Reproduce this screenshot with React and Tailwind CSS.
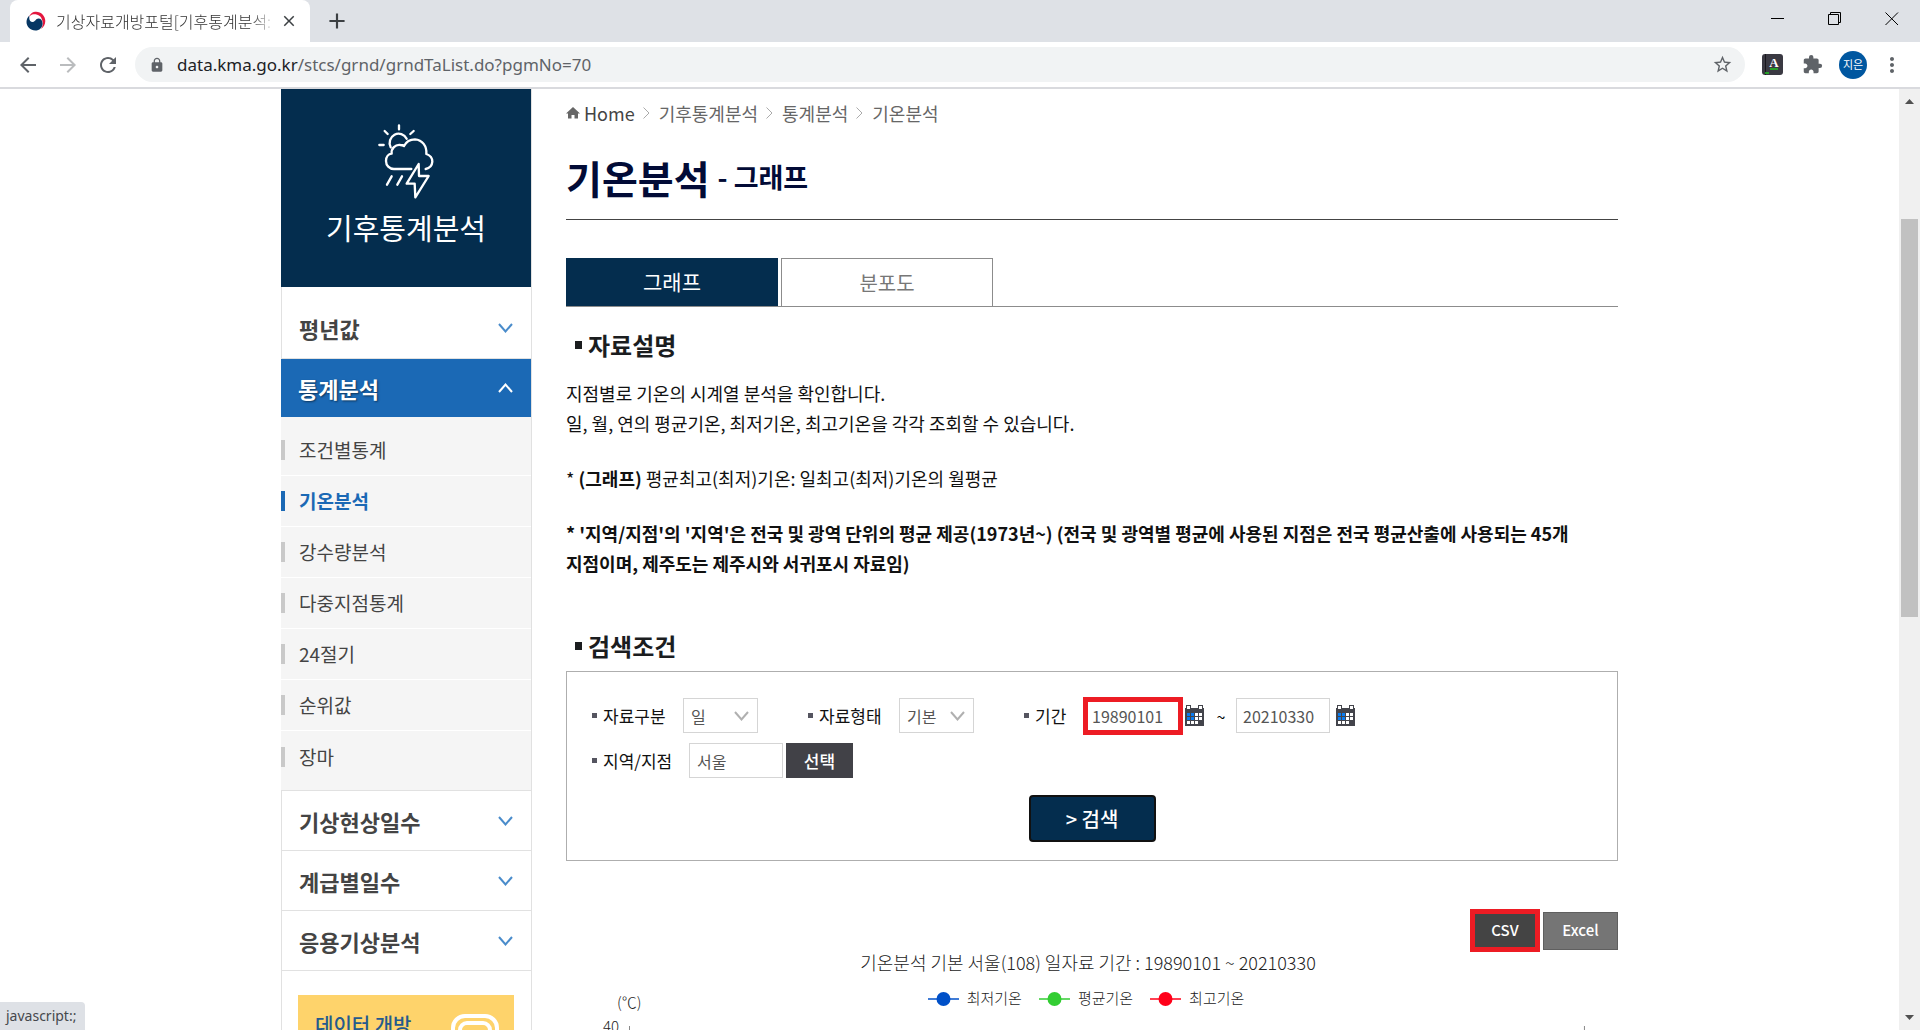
import { useState } from "react";
import {
  MdAdd,
  MdArrowBack,
  MdArrowForward,
  MdClose,
  MdExtension,
  MdLock,
  MdMoreVert,
  MdRefresh,
  MdStarBorder,
} from "react-icons/md";

const subMenu = [
  "조건별통계",
  "기온분석",
  "강수량분석",
  "다중지점통계",
  "24절기",
  "순위값",
  "장마",
];

const lowerMenu = ["기상현상일수", "계급별일수", "응용기상분석"];

const legend = [
  { label: "최저기온", color: "#0050c8" },
  { label: "평균기온", color: "#32cd32" },
  { label: "최고기온", color: "#ff0019" },
];

function Favicon() {
  return (
    <svg width="20" height="20" viewBox="0 0 20 20" className="shrink-0">
      <path
        d="M9 0.700C14.500 0 19.300 4.500 19.300 10C19.300 13.500 17.500 16.500 15 18C16.800 15.500 17.300 12.500 16.300 9.500C15.500 5.500 12.500 3 7.500 3.200C5.500 3.400 4 4.500 3 6C4 3 6 1.200 9 0.700Z"
        fill="#e4173e"
      />
      <path
        d="M3.300 4.500C1.500 6.300 0.500 8.500 0.500 11C0.500 15.700 4.500 19.500 9.300 19.500C13.500 19.500 16.600 16.300 16.600 12.400C16.600 9.500 14.800 7.500 12.400 7.500C9.800 7.500 9.300 10.800 6.900 11C4.800 11.200 3.300 9.500 3.300 7.500C3.300 6.500 3.200 5.500 3.300 4.500Z"
        fill="#073763"
      />
    </svg>
  );
}

function Chevron({ up, className }) {
  return (
    <svg
      width="15"
      height="10"
      viewBox="0 0 15 10"
      fill="none"
      stroke="currentColor"
      strokeWidth="2"
      className={className}
    >
      <path d={up ? "M1 9 L7.5 1.5 L14 9" : "M1 1 L7.5 8.5 L14 1"} />
    </svg>
  );
}

function WeatherIcon() {
  return (
    <svg
      width="56"
      height="75"
      viewBox="323 117 168 225"
      fill="none"
      stroke="white"
      strokeWidth="7"
      strokeLinecap="round"
      strokeLinejoin="round"
    >
      <path d="M386 121V133M343 138L352 147M430 138L420 147M327 180H340" />
      <path d="M361 187A27 28 0 0 1 409 161" />
      <path d="M423 252H371C357 252 347 241 347 228C347 215 355 207 364 206C362 190 375 178 390 180C395 180 398 181 401 183C408 169 420 163 434 163C456 164 470 184 468 207C480 211 486 220 486 230C485 243 476 250 466 252" />
      <path d="M445 237L409 296H433L435 337L475 273H446Z" />
      <path d="M364 274L350 299M395 274L381 299" />
    </svg>
  );
}

function CalendarIcon() {
  const cells = [];
  for (let row = 0; row < 3; row++) {
    for (let col = 0; col < 4; col++) {
      if (row === 2 && col === 3) continue;
      cells.push(
        <rect
          key={`${row}-${col}`}
          x={2 + col * 4}
          y={8 + row * 4}
          width="3"
          height="3"
          fill={col < 2 && row < 2 ? "#0a7cf0" : "white"}
        />
      );
    }
  }
  return (
    <svg width="19" height="21" viewBox="0 0 19 21">
      <path d="M0 3H19V21H0Z" fill="#43444b" />
      <path d="M1 0H6V5H1ZM13 0H18V5H13Z" fill="#43444b" />
      <path d="M2 1H5V4H2ZM14 1H17V4H14Z" fill="white" />
      {cells}
    </svg>
  );
}

function TopBar() {
  return (
    <header className="shrink-0 border-b-2 border-[#d9dade]">
      <div className="flex h-[42px] items-stretch bg-[#dee1e6] pl-[10px]">
        <div className="flex w-[300px] items-center rounded-t-lg bg-white pr-2 pl-4">
          <Favicon />
          <span className="ml-[10px] w-[218px] overflow-hidden text-[16px] leading-5 font-light whitespace-nowrap text-[#333] [mask-image:linear-gradient(to_right,black_90%,transparent)]">
            기상자료개방포털[기후통계분석:
          </span>
          <button aria-label="탭 닫기" className="ml-[6px] text-[#3c4043]">
            <MdClose size={18} />
          </button>
        </div>
        <button aria-label="새 탭" className="ml-[14px] text-[#3c4043]">
          <MdAdd size={26} />
        </button>
        <div className="ml-auto flex items-center gap-[43px] pr-[21px] pb-1">
          <button aria-label="최소화">
            <svg width="14" height="14" viewBox="0 0 14 14">
              <path d="M0 6.500H13" stroke="black" />
            </svg>
          </button>
          <button aria-label="이전 크기로">
            <svg width="14" height="14" viewBox="0 0 14 14" fill="none" stroke="black">
              <path d="M0.500 2.500H10.500V12.500H0.500ZM2.500 2.500V0.500H12.500V10.500H10.500" />
            </svg>
          </button>
          <button aria-label="닫기">
            <svg width="14" height="14" viewBox="0 0 14 14" stroke="black">
              <path d="M0.500 0.500L13 13M13 0.500L0.500 13" />
            </svg>
          </button>
        </div>
      </div>

      <div className="flex h-[45px] items-center pl-4">
        <div className="flex gap-4 text-[#5f6368]">
          <button aria-label="뒤로">
            <MdArrowBack size={24} />
          </button>
          <button aria-label="앞으로" className="text-[#babcbe]">
            <MdArrowForward size={24} />
          </button>
          <button aria-label="새로고침">
            <MdRefresh size={24} />
          </button>
        </div>
        <div className="ml-[15px] flex h-[35px] flex-1 items-center rounded-full bg-[#f1f3f4] pr-3 pl-[14px] text-[#5f6368]">
          <MdLock size={16} />
          <span className="ml-3 flex-1 font-['Noto_Sans'] text-[17px] leading-6">
            <span className="text-[#202124]">data.kma.go.kr</span>
            /stcs/grnd/grndTaList.do?pgmNo=70
          </span>
          <button aria-label="북마크">
            <MdStarBorder size={21} />
          </button>
        </div>
        <button aria-label="사전" className="ml-[17px]">
          <svg width="21" height="21" viewBox="0 0 21 21">
            <rect width="21" height="21" rx="3" fill="#3a3942" />
            <path d="M3.500 0V21" stroke="#17161c" />
            <text x="12" y="13" fill="white" fontSize="13" fontWeight="bold" textAnchor="middle" fontFamily="Liberation Serif, serif">
              A
            </text>
            <path d="M8 15H16M3 19H7" stroke="#1fc21f" strokeWidth="1.500" />
          </svg>
        </button>
        <button aria-label="확장 프로그램" className="ml-[19px] text-[#5f6368]">
          <MdExtension size={21} />
        </button>
        <button className="ml-4 h-7 w-7 rounded-full bg-[#0057a0] text-[11px] text-white">
          지은
        </button>
        <button aria-label="메뉴" className="mr-4 ml-[13px] text-[#5f6368]">
          <MdMoreVert size={24} />
        </button>
      </div>
    </header>
  );
}

function MenuButton({ children, className }) {
  return (
    <button
      className={`flex w-full items-center justify-between border-b border-[#e1e1e1] pr-[18px] pl-[17px] text-[22px] leading-[30px] font-bold text-[#444] ${className}`}
    >
      {children}
      <Chevron className="text-[#4a8ccb]" />
    </button>
  );
}

function Sidebar() {
  return (
    <aside className="w-[251px] shrink-0 border-r border-[#e1e1e1]">
      <div className="flex flex-col items-center bg-[#042d4e] pt-[35px] pb-10 text-white">
        <WeatherIcon />
        <p className="mt-2 text-[29px] leading-10">기후통계분석</p>
      </div>

      <nav>
        <MenuButton className="h-[72px] border-l pt-[11px]">평년값</MenuButton>
        <button className="flex h-[58px] w-full items-center justify-between bg-[#1b69b5] pr-[18px] pl-[17px] text-[22px] leading-[30px] font-bold text-white [text-shadow:1px_1px_2px_rgba(0,0,0,0.5)]">
          통계분석
          <Chevron up />
        </button>

        <ul className="border-b border-[#e1e1e1] bg-[#f5f5f5] pt-2 pb-2">
          {subMenu.map((item) => (
            <li
              key={item}
              className="flex h-[51px] items-center border-b border-white last:border-b-0"
            >
              <span
                className={`h-5 w-1 ${
                  item === "기온분석" ? "bg-[#1b69b5]" : "bg-[#c9c9c9]"
                }`}
              />
              <a
                href="#"
                className={`ml-[14px] text-[19px] leading-[30px] ${
                  item === "기온분석"
                    ? "font-bold text-[#1b69b5]"
                    : "text-[#444]"
                }`}
              >
                {item}
              </a>
            </li>
          ))}
        </ul>

        {lowerMenu.map((item) => (
          <MenuButton key={item} className="h-[60px] border-l">
            {item}
          </MenuButton>
        ))}
      </nav>

      <div className="border-l border-[#e1e1e1] pt-6 pr-[17px] pl-4">
        <a
          href="#"
          className="flex h-[120px] items-start justify-between bg-[#fed36b] pt-[15px] pr-[15px] pl-[17px] text-[20px] leading-[30px] font-medium text-[#255a8d]"
        >
          데이터 개방
          <svg width="48" height="48" viewBox="0 0 48 48" fill="none" stroke="white" strokeWidth="4" className="mt-1">
            <rect x="2" y="2" width="44" height="40" rx="12" />
            <rect x="9" y="9" width="30" height="28" rx="7" />
          </svg>
        </a>
      </div>
    </aside>
  );
}

function Breadcrumb() {
  return (
    <div className="flex items-center pt-[11px] text-[18px] leading-[26px] text-[#666]">
      <svg width="14" height="12" viewBox="0 0 14 12" fill="#666">
        <path d="M7 0L14 6.500H12V11.500H8.500V8H5.500V11.500H2V6.500H0Z" />
      </svg>
      <a href="#" className="ml-1 text-[#444]">
        Home
      </a>
      {["기후통계분석", "통계분석", "기온분석"].map((item) => (
        <span key={item} className="flex items-center">
          <svg width="7" height="12" viewBox="0 0 7 12" fill="none" stroke="#aaa" className="mr-[9px] ml-2">
            <path d="M0.500 0.500L6 6L0.500 11.500" />
          </svg>
          <a href="#">{item}</a>
        </span>
      ))}
    </div>
  );
}

function SectionTitle({ children }) {
  return (
    <h3 className="flex items-center gap-[6px] pl-[9px] text-[24px] leading-9 font-bold text-[#1b1d1f]">
      <span className="h-2 w-[7px] bg-[#1b1d1f]" />
      {children}
    </h3>
  );
}

function FieldLabel({ htmlFor, className, children }) {
  return (
    <label
      htmlFor={htmlFor}
      className={`flex items-center gap-[6px] text-[17px] leading-6 whitespace-nowrap text-[#111] ${className}`}
    >
      <span className="h-[5px] w-[5px] bg-[#555560]" />
      {children}
    </label>
  );
}

function SelectBox({ id, value }) {
  return (
    <div className="relative mr-[50px] h-[35px] w-[75px]">
      <select
        id={id}
        defaultValue={value}
        className="h-full w-full appearance-none border border-[#d5d5d5] bg-white pl-[7px] text-[16px] text-[#555]"
      >
        <option>{value}</option>
      </select>
      <Chevron className="pointer-events-none absolute top-[13px] right-[9px] text-[#b0b0b0]" />
    </div>
  );
}

function SearchForm() {
  const [start, setStart] = useState("19890101");
  const [end, setEnd] = useState("20210330");
  const [area, setArea] = useState("서울");

  return (
    <form
      onSubmit={(e) => e.preventDefault()}
      className="mt-[7px] border border-[#aeaeae] px-[25px] pt-[21px] pb-[18px]"
    >
      <div className="flex h-[45px] items-center">
        <FieldLabel htmlFor="kind" className="w-[91px]">
          자료구분
        </FieldLabel>
        <SelectBox id="kind" value="일" />
        <FieldLabel htmlFor="form" className="w-[91px]">
          자료형태
        </FieldLabel>
        <SelectBox id="form" value="기본" />
        <FieldLabel htmlFor="start" className="w-[59px]">
          기간
        </FieldLabel>
        <input
          id="start"
          value={start}
          onChange={(e) => setStart(e.target.value)}
          className="h-[38px] w-[100px] border-[5px] border-[#ed1c24] pl-1 text-[16px] text-[#555]"
        />
        <button type="button" aria-label="시작일 선택" className="ml-[2px]">
          <CalendarIcon />
        </button>
        <span className="w-8 pl-[2px] text-center text-[16px]">~</span>
        <input
          aria-label="종료일"
          value={end}
          onChange={(e) => setEnd(e.target.value)}
          className="h-[35px] w-[94px] border border-[#d5d5d5] pl-[6px] text-[16px] text-[#555]"
        />
        <button type="button" aria-label="종료일 선택" className="ml-[6px]">
          <CalendarIcon />
        </button>
      </div>

      <div className="flex h-[45px] items-center">
        <FieldLabel htmlFor="area" className="w-[97px]">
          지역/지점
        </FieldLabel>
        <input
          id="area"
          value={area}
          onChange={(e) => setArea(e.target.value)}
          className="h-[35px] w-[94px] border border-[#d5d5d5] pl-[7px] text-[16px] text-[#555]"
        />
        <button
          type="button"
          className="ml-[3px] h-[35px] w-[67px] bg-[#414147] text-[17px] font-medium text-white"
        >
          선택
        </button>
      </div>

      <button
        type="submit"
        className="mx-auto mt-3 block h-[47px] w-[127px] rounded border-2 border-[#111] bg-[#042d4e] text-[20px] font-medium text-white"
      >
        &gt; 검색
      </button>
    </form>
  );
}

function Chart() {
  return (
    <section>
      <div className="mt-12 flex items-center justify-end gap-[3px] text-[15px] font-medium text-white">
        <button className="h-[43px] w-[70px] border-[5px] border-[#ed1c24] bg-[#444]">
          CSV
        </button>
        <button className="h-[38px] w-[75px] border border-[#5f5f5f] bg-[#757575]">
          Excel
        </button>
      </div>

      <p className="pr-2 text-center text-[18px] leading-5 font-light text-[#222]">
        기온분석 기본 서울(108) 일자료 기간 : 19890101 ~ 20210330
      </p>
      <div className="mt-4 grid grid-cols-[1fr_auto_1fr] items-end pr-3">
        <span className="pl-[51px] text-[15px] leading-3 font-light text-[#222]">
          (℃)
        </span>
        <ul className="flex gap-[17px] text-[15px] leading-5 font-light text-[#222]">
          {legend.map((item) => (
            <li key={item.label} className="flex items-center gap-2">
              <svg width="31" height="16" viewBox="0 0 31 16">
                <path d="M0 9H31" stroke={item.color} strokeWidth="1.500" />
                <circle cx="15.500" cy="9" r="7" fill={item.color} />
              </svg>
              {item.label}
            </li>
          ))}
        </ul>
      </div>
      <div className="mt-2 flex items-center justify-between pr-[33px] pl-[37px] text-[15px] leading-5 font-light text-[#222]">
        <span>40</span>
        <svg viewBox="0 0 960 10" height="10" preserveAspectRatio="none" className="ml-[10px] flex-1">
          <path d="M0.500 5V10M959.500 5V10" stroke="#888" />
        </svg>
      </div>
      <div className="h-80" />
    </section>
  );
}

function Scrollbar() {
  return (
    <div aria-hidden="true" className="flex w-[21px] shrink-0 flex-col items-center justify-between bg-[#f0f0f0] py-[10px]">
      <svg width="9" height="5" viewBox="0 0 9 5" fill="#505050">
        <path d="M0 5L4.500 0L9 5Z" />
      </svg>
      <div className="flex w-full flex-1 flex-col px-[2px]">
        <div className="h-[115px]" />
        <div className="h-[398px] bg-[#c1c1c1]" />
      </div>
      <svg width="9" height="5" viewBox="0 0 9 5" fill="#505050">
        <path d="M0 0L4.500 5L9 0Z" />
      </svg>
    </div>
  );
}

export default function App() {
  return (
    <div className="relative flex h-screen flex-col overflow-hidden bg-white font-['Noto_Sans_CJK_KR',sans-serif]">
      <TopBar />

      <div className="flex min-h-0 flex-1">
        <div className="flex-1 overflow-hidden">
          <div className="mx-auto flex max-w-[1337px] gap-[34px]">
            <Sidebar />

            <main className="min-w-0 flex-1">
              <Breadcrumb />

              {/* Page title */}
              <h1 className="mt-6 flex items-center gap-2 border-b border-[#444] pb-[15px] text-[39px] leading-[54px] font-bold text-[#020b36]">
                기온분석
                <span className="text-[27px]">- 그래프</span>
              </h1>

              {/* Tabs */}
              <div className="mt-[38px] flex gap-[3px] border-b border-[#8c8c8c]">
                <button className="h-[48px] w-[212px] bg-[#042d4e] text-[21px] text-white">
                  그래프
                </button>
                <button className="h-[48px] w-[212px] border border-b-0 border-[#8c8c8c] text-[20px] text-[#777]">
                  분포도
                </button>
              </div>

              {/* Description */}
              <div className="mt-5">
                <SectionTitle>자료설명</SectionTitle>
                <div className="mt-[15px] text-[18px] leading-[30px] text-[#111]">
                  <p>지점별로 기온의 시계열 분석을 확인합니다.</p>
                  <p>
                    일, 월, 연의 평균기온, 최저기온, 최고기온을 각각 조회할 수
                    있습니다.
                  </p>
                  <p className="mt-[25px]">
                    * <b className="font-bold">(그래프)</b>{" "}
                    평균최고(최저)기온: 일최고(최저)기온의 월평균
                  </p>
                  <p className="mt-[25px] font-bold">
                    * '지역/지점'의 '지역'은 전국 및 광역 단위의 평균
                    제공(1973년~) (전국 및 광역별 평균에 사용된 지점은 전국
                    평균산출에 사용되는 45개
                    <br />
                    지점이며, 제주도는 제주시와 서귀포시 자료임)
                  </p>
                </div>
              </div>

              {/* Search */}
              <div className="mt-[50px]">
                <SectionTitle>검색조건</SectionTitle>
                <SearchForm />
              </div>

              <Chart />
            </main>
          </div>
        </div>
        <Scrollbar />
      </div>

      <div className="absolute bottom-0 left-0 h-7 w-[85px] rounded-tr bg-[#dee1e6] pl-[6px] font-['Noto_Sans'] text-[14px] leading-7 text-[#45484c]">
        javascript:;
      </div>
    </div>
  );
}
